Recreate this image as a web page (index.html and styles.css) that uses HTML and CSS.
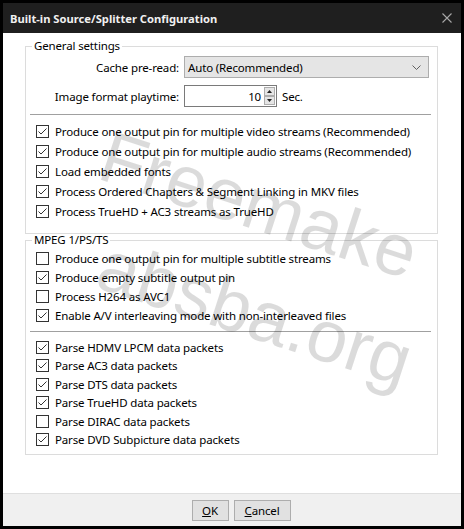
FILE: index.html
```html
<!doctype html>
<html lang="en">
<head>
    <title>Built-in Source/Splitter Configuration</title>
    <link rel="stylesheet" href="styles.css">
</head>
<body>
<div class="window">
    <div class="titlebar">
        <span class="title">Built-in Source/Splitter Configuration</span>
        <svg class="close" width="10" height="10" viewBox="0 0 10 10"><path d="M0.5 0.5 L9.5 9.5 M9.5 0.5 L0.5 9.5" stroke="#a8a8a8" stroke-width="1.1" fill="none"/></svg>
    </div>

    <div class="content">
        <fieldset class="group group-general">
            <legend>General settings</legend>
            <div class="settings">
                <span class="label">Cache pre-read:</span>
                <div class="combo">
                    <span>Auto (Recommended)</span>
                    <svg width="9" height="5" viewBox="0 0 9 5"><path d="M0.5 0.5 L4.5 4.5 L8.5 0.5" stroke="#606060" fill="none"/></svg>
                </div>
                <span class="label">Image format playtime:</span>
                <div class="spin-row">
                    <div class="spin">
                        <span class="spin-value">10</span>
                        <div class="spin-buttons">
                            <span class="spin-btn"><svg width="5" height="3" viewBox="0 0 5 3"><path d="M2.5 0 L5 3 L0 3 Z" fill="#222"/></svg></span>
                            <span class="spin-btn"><svg width="5" height="3" viewBox="0 0 5 3"><path d="M0 0 L5 0 L2.5 3 Z" fill="#222"/></svg></span>
                        </div>
                    </div>
                    <span>Sec.</span>
                </div>
            </div>
            <hr class="separator">
            <ul class="checks">
                <li class="on"><span class="box"></span>Produce one output pin for multiple video streams (Recommended)</li>
                <li class="on"><span class="box"></span>Produce one output pin for multiple audio streams (Recommended)</li>
                <li class="on"><span class="box"></span>Load embedded fonts</li>
                <li class="on"><span class="box"></span>Process Ordered Chapters &amp; Segment Linking in MKV files</li>
                <li class="on"><span class="box"></span>Process TrueHD + AC3 streams as TrueHD</li>
            </ul>
        </fieldset>

        <fieldset class="group group-mpeg">
            <legend>MPEG 1/PS/TS</legend>
            <ul class="checks">
                <li><span class="box"></span>Produce one output pin for multiple subtitle streams</li>
                <li class="on"><span class="box"></span>Produce empty subtitle output pin</li>
                <li><span class="box"></span>Process H264 as AVC1</li>
                <li class="on"><span class="box"></span>Enable A/V interleaving mode with non-interleaved files</li>
            </ul>
            <hr class="separator">
            <ul class="checks checks-tight">
                <li class="on"><span class="box"></span>Parse HDMV LPCM data packets</li>
                <li class="on"><span class="box"></span>Parse AC3 data packets</li>
                <li class="on"><span class="box"></span>Parse DTS data packets</li>
                <li class="on"><span class="box"></span>Parse TrueHD data packets</li>
                <li><span class="box"></span>Parse DIRAC data packets</li>
                <li class="on"><span class="box"></span>Parse DVD Subpicture data packets</li>
            </ul>
        </fieldset>
    </div>

    <div class="footer">
        <button class="btn btn-ok"><u>O</u>K</button>
        <button class="btn btn-cancel"><u>C</u>ancel</button>
    </div>

    <div class="watermark">
        <span class="wm-line wm-top">Freemake</span>
        <span class="wm-line wm-bottom">absba.org</span>
    </div>
</div>
</body>
</html>
```

FILE: styles.css
```css
body {
    margin: 0;
    background: #000;
    font-family: "Noto Sans", sans-serif;
    font-size: 11.5px;
    letter-spacing: -0.15px;
    color: #000;
}
.window {
    margin: 3px;
    height: 523px;
    background: #fff;
    display: flex;
    flex-direction: column;
    position: relative;
    overflow: hidden;
}
.titlebar {
    height: 30px;
    flex-shrink: 0;
    background: #1f1f1f;
    display: flex;
    align-items: center;
    justify-content: space-between;
    padding: 0 9px 0 7px;
    color: #f0f0f0;
    font-weight: bold;
    font-size: 11.2px;
    letter-spacing: 0;
}
.content {
    flex: 1;
    padding: 0 23px 0 22px;
}
.group {
    margin: 0;
    min-width: 0;
    padding: 4px 8px 12px 10px;
    border: 1px solid #dcdcdc;
}
.group-general {
    margin-top: 7px;
}
.group-mpeg {
    padding-top: 3px;
    padding-bottom: 5px;
}
.group legend {
    line-height: 12px;
    padding: 0 2px;
    margin-left: -4px;
}
.settings {
    display: grid;
    grid-template-columns: 143px minmax(0, 1fr);
    column-gap: 5px;
    row-gap: 7px;
    align-items: center;
}
.label {
    text-align: right;
}
.combo {
    height: 22px;
    box-sizing: border-box;
    background: #e5e5e5;
    border: 1px solid #adadad;
    padding: 0 7px 0 3px;
    display: flex;
    align-items: center;
    justify-content: space-between;
}
.spin-row {
    display: flex;
    align-items: center;
    gap: 5px;
}
.spin {
    width: 93px;
    height: 22px;
    box-sizing: border-box;
    border: 1px solid #7a7a7a;
    display: flex;
    align-items: center;
    justify-content: flex-end;
    padding-right: 1px;
    gap: 3px;
}
.spin-buttons {
    display: flex;
    flex-direction: column;
}
.spin-btn {
    width: 11px;
    height: 9px;
    box-sizing: border-box;
    border: 1px solid #adadad;
    background: #e5e5e5;
    display: flex;
    align-items: center;
    justify-content: center;
}
.separator {
    border: 0;
    border-top: 1px solid #a0a0a0;
    margin: 7px -2px 6px -6px;
}
.group-mpeg .separator {
    margin-top: 6px;
}
.checks {
    list-style: none;
    margin: 0;
    padding: 0;
}
.checks li {
    height: 20px;
    display: flex;
    align-items: center;
    gap: 6px;
    white-space: nowrap;
}
.group-mpeg .checks li {
    height: 19px;
}
.group-mpeg .checks-tight li {
    height: 18.5px;
}
.box {
    width: 13px;
    height: 13px;
    box-sizing: border-box;
    border: 1px solid #333;
    background: #fff;
    flex-shrink: 0;
}
.on .box {
    background: #fff url("data:image/svg+xml;utf8,<svg xmlns='http://www.w3.org/2000/svg' width='11' height='11' viewBox='0 0 11 11'><path d='M1.5 5.5 L4 8 L9.5 2.5' stroke='%23333' stroke-width='1' fill='none'/></svg>") no-repeat center;
}
.footer {
    height: 33px;
    box-sizing: border-box;
    flex-shrink: 0;
    background: #f0f0f0;
    border-top: 1px solid #dfdfdf;
    display: flex;
    justify-content: center;
    align-items: flex-start;
    gap: 5px;
    padding: 6px 0 0 18px;
}
.btn {
    height: 21px;
    box-sizing: border-box;
    background: #e1e1e1;
    border: 1px solid #adadad;
    font-family: inherit;
    font-size: 11.5px;
    letter-spacing: -0.15px;
    color: #000;
    padding: 0;
}
.btn-ok {
    width: 37px;
}
.btn-cancel {
    width: 57px;
}
.watermark {
    position: absolute;
    inset: 0;
    pointer-events: none;
    font-family: "Liberation Sans", sans-serif;
    font-size: 73px;
    letter-spacing: 0;
    color: rgba(0, 0, 0, 0.14);
}
.wm-line {
    position: absolute;
    transform: rotate(18deg);
    white-space: nowrap;
}
.wm-top {
    left: 92px;
    top: 160px;
}
.wm-bottom {
    left: 90px;
    top: 268px;
}
```
